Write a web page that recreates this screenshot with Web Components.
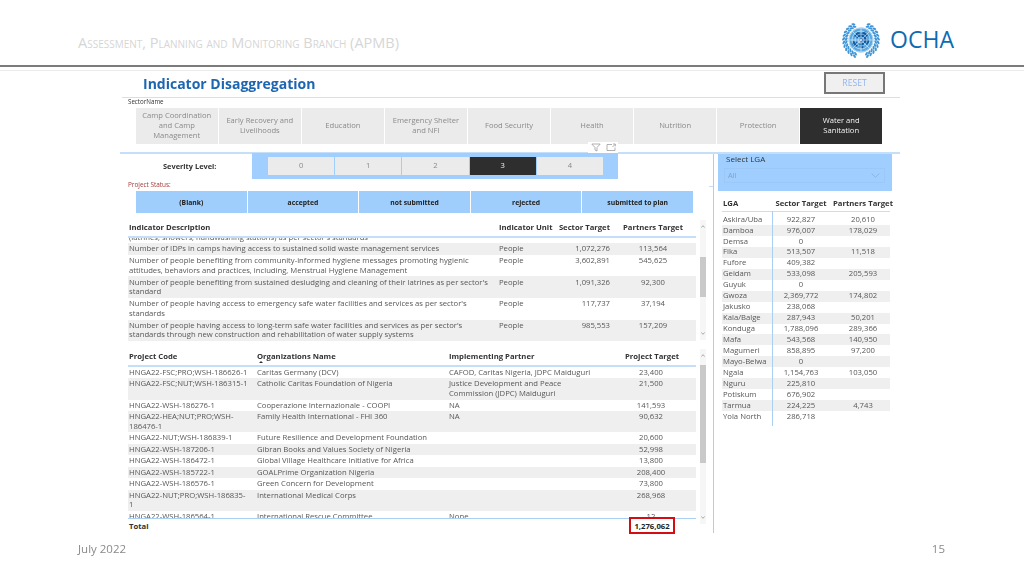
<!DOCTYPE html>
<html>
<head>
<meta charset="utf-8">
<title>Indicator Disaggregation</title>
<style>
html, body { margin: 0; width: 1024px; height: 576px; overflow: hidden; background: #fff; }
body { font-family: "Open Sans", "Liberation Sans", sans-serif; }
</style>
</head>
<body>
<slide-page>
  <slide-header slot="header">Assessment, Planning and Monitoring Branch (APMB)</slide-header>

  <report-title>Indicator Disaggregation</report-title>
  <field-label>SectorName</field-label>
  <tile-row style="--tile-h:36px; --tile-gap:1.5px; --tile-font:7.6px; margin:2px 18px 0 16px">
    <slicer-tile>Camp Coordination<br>and Camp<br>Management</slicer-tile>
    <slicer-tile>Early Recovery and<br>Livelihoods</slicer-tile>
    <slicer-tile>Education</slicer-tile>
    <slicer-tile>Emergency Shelter<br>and NFI</slicer-tile>
    <slicer-tile>Food Security</slicer-tile>
    <slicer-tile>Health</slicer-tile>
    <slicer-tile>Nutrition</slicer-tile>
    <slicer-tile>Protection</slicer-tile>
    <slicer-tile selected>Water and<br>Sanitation</slicer-tile>
  </tile-row>
  <visual-icons></visual-icons>

  <report-split>
    <div slot="left">
      <severity-bar>
        <slicer-tile>0</slicer-tile>
        <slicer-tile>1</slicer-tile>
        <slicer-tile>2</slicer-tile>
        <slicer-tile selected>3</slicer-tile>
        <slicer-tile>4</slicer-tile>
      </severity-bar>
      <field-label status>Project Status:</field-label>
      <status-bar>
        <status-button>(Blank)</status-button>
        <status-button>accepted</status-button>
        <status-button>not submitted</status-button>
        <status-button>rejected</status-button>
        <status-button>submitted to plan</status-button>
      </status-bar>

      <data-table style="--cols:370px 58px 53px 86px; --row-pad:1.1px; --body-h:105px; --gap-top:7px; --thumb-top:37px; --thumb-h:40px; --track-h:120px; --skip:-5.8px; --first-pad:0px">
        <table-head>
          <span>Indicator Description</span><span>Indicator Unit</span><span class="r">Sector Target</span><span class="c">Partners Target</span>
        </table-head>
        <table-row><span>(latrines, showers, handwashing stations) as per sector's standards</span><span></span><span></span><span></span></table-row>
        <table-row><span>Number of IDPs in camps having access to sustained solid waste management services</span><span>People</span><span class="r">1,072,276</span><span class="c">113,564</span></table-row>
        <table-row><span>Number of people benefiting from community-informed hygiene messages promoting hygienic<br>attitudes, behaviors and practices, including, Menstrual Hygiene Management</span><span>People</span><span class="r">3,602,891</span><span class="c">545,625</span></table-row>
        <table-row><span>Number of people benefiting from sustained desludging and cleaning of their latrines as per sector's<br>standard</span><span>People</span><span class="r">1,091,326</span><span class="c">92,300</span></table-row>
        <table-row><span>Number of people having access to emergency safe water facilities and services as per sector's<br>standards</span><span>People</span><span class="r">117,737</span><span class="c">37,194</span></table-row>
        <table-row><span>Number of people having access to long-term safe water facilities and services as per sector's<br>standards through new construction and rehabilitation of water supply systems</span><span>People</span><span class="r">985,553</span><span class="c">157,209</span></table-row>
        <table-row><span>Number of people having access to sanitation facilities</span><span>People</span><span class="r">2,944,907</span><span class="c">199,770</span></table-row>
      </data-table>

      <data-table style="--cols:128px 192px 176px 52px; --row-pad:.9px; --body-h:151px; --gap-top:6px; --thumb-top:16px; --thumb-h:98px; --track-h:175px; --skip:0px; --first-pad:.9px">
        <table-head>
          <span>Project Code</span><span sorted>Organizations Name</span><span>Implementing Partner</span><span class="c nowrap">Project Target</span>
        </table-head>
        <table-row><span>HNGA22-FSC;PRO;WSH-186626-1</span><span>Caritas Germany (DCV)</span><span>CAFOD, Caritas Nigeria, JDPC Maiduguri</span><span class="c">23,400</span></table-row>
        <table-row><span>HNGA22-FSC;NUT;WSH-186315-1</span><span>Catholic Caritas Foundation of Nigeria</span><span>Justice Development and Peace<br>Commission (JDPC) Maiduguri</span><span class="c">21,500</span></table-row>
        <table-row><span>HNGA22-WSH-186276-1</span><span>Cooperazione Internazionale - COOPI</span><span>NA</span><span class="c">141,593</span></table-row>
        <table-row><span>HNGA22-HEA;NUT;PRO;WSH-<br>186476-1</span><span>Family Health International - FHI 360</span><span>NA</span><span class="c">90,632</span></table-row>
        <table-row><span>HNGA22-NUT;WSH-186839-1</span><span class="nowrap">Future Resilience and Development Foundation</span><span></span><span class="c">20,600</span></table-row>
        <table-row><span>HNGA22-WSH-187206-1</span><span>Gibran Books and Values Society of Nigeria</span><span></span><span class="c">52,998</span></table-row>
        <table-row><span>HNGA22-WSH-186472-1</span><span>Global Village Healthcare Initiative for Africa</span><span></span><span class="c">13,800</span></table-row>
        <table-row><span>HNGA22-WSH-185722-1</span><span>GOALPrime Organization Nigeria</span><span></span><span class="c">208,400</span></table-row>
        <table-row><span>HNGA22-WSH-186576-1</span><span>Green Concern for Development</span><span></span><span class="c">73,800</span></table-row>
        <table-row><span>HNGA22-NUT;PRO;WSH-186835-<br>1</span><span>International Medical Corps</span><span></span><span class="c">268,968</span></table-row>
        <table-row><span>HNGA22-WSH-186564-1</span><span>International Rescue Committee</span><span>None</span><span class="c">12</span></table-row>
        <table-total slot="total"><span>Total</span><span></span><span></span><mark-cell>1,276,062</mark-cell></table-total>
      </data-table>
    </div>

    <lga-panel slot="right">
      <table-row><span>Askira/Uba</span><span class="c">922,827</span><span class="c">20,610</span></table-row>
      <table-row><span>Damboa</span><span class="c">976,007</span><span class="c">178,029</span></table-row>
      <table-row><span>Demsa</span><span class="c">0</span><span class="c"></span></table-row>
      <table-row><span>Fika</span><span class="c">513,507</span><span class="c">11,518</span></table-row>
      <table-row><span>Fufore</span><span class="c">409,382</span><span class="c"></span></table-row>
      <table-row><span>Geidam</span><span class="c">533,098</span><span class="c">205,593</span></table-row>
      <table-row><span>Guyuk</span><span class="c">0</span><span class="c"></span></table-row>
      <table-row><span>Gwoza</span><span class="c">2,369,772</span><span class="c">174,802</span></table-row>
      <table-row><span>Jakusko</span><span class="c">238,068</span><span class="c"></span></table-row>
      <table-row><span>Kala/Balge</span><span class="c">287,943</span><span class="c">50,201</span></table-row>
      <table-row><span>Konduga</span><span class="c">1,788,096</span><span class="c">289,366</span></table-row>
      <table-row><span>Mafa</span><span class="c">543,568</span><span class="c">140,950</span></table-row>
      <table-row><span>Magumeri</span><span class="c">858,895</span><span class="c">97,200</span></table-row>
      <table-row><span>Mayo-Belwa</span><span class="c">0</span><span class="c"></span></table-row>
      <table-row><span>Ngala</span><span class="c">1,154,763</span><span class="c">103,050</span></table-row>
      <table-row><span>Nguru</span><span class="c">225,810</span><span class="c"></span></table-row>
      <table-row><span>Potiskum</span><span class="c">676,902</span><span class="c"></span></table-row>
      <table-row><span>Tarmua</span><span class="c">224,225</span><span class="c">4,743</span></table-row>
      <table-row><span>Yola North</span><span class="c">286,718</span><span class="c"></span></table-row>
    </lga-panel>
  </report-split>

  <slide-footer slot="footer"></slide-footer>
</slide-page>

<script>
// tiny helper so each element below stays a few lines
function shadow(el, html) {
  el.attachShadow({mode: 'open'}).innerHTML = html
}

class SlidePage extends HTMLElement {
  constructor() {
    super()
    shadow(this, `<style>
:host { display: flex; flex-direction: column; width: 1024px; height: 576px; overflow: hidden; position: relative; }
.report { flex: 1; width: 780px; margin-left: 120px; min-height: 0; filter: blur(.35px); position: relative; }
</style>
<slot name="header"></slot>
<div class="report"><slot></slot></div>
<slot name="footer"></slot>`)
  }
}

class UnEmblem extends HTMLElement {
  constructor() {
    super()
    let leaves = ''
    for (const side of [1, -1]) {
      for (let a = 26; a <= 168; a += 12) {
        const rad = a * Math.PI / 180
        for (const r of [14.8, 17.4]) {
          const x = (20 + side * r * Math.sin(rad)).toFixed(1)
          const y = (20 - r * Math.cos(rad)).toFixed(1)
          leaves += `<ellipse cx="${x}" cy="${y}" rx="1.05" ry="2" fill="#3d94d6" transform="rotate(${side * (a + 55)} ${x} ${y})"/>`
        }
      }
    }
    let spokes = ''
    for (let a = 0; a < 180; a += 45) {
      spokes += `<line x1="20" y1="8" x2="20" y2="32" transform="rotate(${a} 20 20)"/>`
    }
    shadow(this, `<style>:host { display: block; width: 40px; height: 40px; } svg { display: block; }</style>
<svg width="40" height="40" viewBox="0 0 40 40">
  ${leaves}
  <circle cx="20" cy="20" r="12.4" fill="#5aa8e0"/>
  <path fill="#0d5ea8" d="M20 20l-7-4 3-4 5 1 3-2 3 4-2 3 4 3-3 4-3-2-1 6-4-3zM12 21l4 1 1 4-3 1-3-3z"/>
  <g fill="none" stroke="#fff" stroke-width=".5">
    <circle cx="20" cy="20" r="12"/><circle cx="20" cy="20" r="9"/><circle cx="20" cy="20" r="6"/><circle cx="20" cy="20" r="3"/>
    ${spokes}
  </g>
</svg>`)
  }
}

class SlideHeader extends HTMLElement {
  constructor() {
    super()
    shadow(this, `<style>
:host { display: flex; align-items: flex-start; height: 65px; border-bottom: 2px solid #7b7b7b; box-shadow: 0 3px 0 0 #fff, 0 4px 0 0 #ececec; font-family: "Open Sans", "Liberation Sans", sans-serif; }
.t { margin: 34px 0 0 78px; flex: 1; font-size: 14.5px; line-height: 18px; font-variant: small-caps; color: #d6d6d6; white-space: nowrap; }
un-emblem { margin: 20px 9px 0 0; }
.o { margin: 24px 70px 0 0; font-size: 23px; line-height: 31px; color: #0b6cb3; }
</style>
<div class="t"><slot></slot></div><un-emblem></un-emblem><div class="o">OCHA</div>`)
  }
}

class ReportTitle extends HTMLElement {
  constructor() {
    super()
    shadow(this, `<style>
:host { display: flex; align-items: center; justify-content: space-between; height: 26px; margin-top: 4px; margin-left: 2px; padding: 0 15px 0 21px; border-bottom: 1px solid #cfe2f5; font-family: "Open Sans", sans-serif; }
h1 { margin: 0; font-size: 14px; line-height: 20px; font-weight: 700; color: #1d66b1; }
button { width: 61px; height: 22px; margin-bottom: 2px; padding: 0; border: 2px solid #777; background: #f0f0f0; color: #8fb6f2; font: 8.6px "Open Sans", sans-serif; }
</style>
<h1><slot></slot></h1><button>RESET</button>`)
  }
}

class FieldLabel extends HTMLElement {
  constructor() {
    super()
    shadow(this, `<style>
:host { display: block; height: 8px; margin: 0 0 0 8px; font-size: 6.2px; line-height: 8px; color: #333; }
:host([status]) { color: #a13a3a; margin-top: 2px; font-size: 6.4px; }
</style><slot></slot>`)
  }
}

class TileRow extends HTMLElement {
  constructor() {
    super()
    shadow(this, `<style>
:host { display: grid; grid-auto-flow: column; grid-auto-columns: 1fr; gap: var(--tile-gap, 1px); height: var(--tile-h, 18px); }
</style><slot></slot>`)
  }
}

class SlicerTile extends HTMLElement {
  constructor() {
    super()
    shadow(this, `<style>
:host { display: flex; align-items: center; justify-content: center; text-align: center; background: #ebebeb; color: #8a8a8a; font-size: var(--tile-font, 7.6px); line-height: 9.7px; }
:host([selected]) { background: #2e2e2e; color: #f4f4f4; }
</style><div><slot></slot></div>`)
  }
}

class VisualIcons extends HTMLElement {
  constructor() {
    super()
    shadow(this, `<style>
:host { display: block; height: 8px; border-bottom: 2px solid #c5dff8; position: relative; }
.i { position: absolute; left: 468px; top: -2px; width: 30px; height: 11px; background: #fff; }
svg { position: absolute; top: 1px; }
</style>
<div class="i">
  <svg style="left:3px" width="10" height="9" viewBox="0 0 10 9" fill="none" stroke="#8f8f8f" stroke-width=".7"><path d="M.8 1h8.4L6 4.5V8L4 7V4.5z"/></svg>
  <svg style="left:18px" width="10" height="9" viewBox="0 0 10 9" fill="none" stroke="#8f8f8f" stroke-width=".7"><path d="M6 1.5H1v6h8V4.5M6.5 4L9 1.5M7 1h2.3v2.3"/></svg>
</div>`)
  }
}

class ReportSplit extends HTMLElement {
  constructor() {
    super()
    shadow(this, `<style>
:host { display: grid; grid-template-columns: 594px 178px; height: 376px; }
.l { border-right: 1px solid #a9cff2; position: relative; }
.l::after { content: ""; position: absolute; right: 0; top: 32px; width: 4px; height: 1px; background: #c5dff8; }
.r { padding-left: 4px; }
</style>
<div class="l"><slot name="left"></slot></div>
<div class="r"><slot name="right"></slot></div>`)
  }
}

class SeverityBar extends HTMLElement {
  constructor() {
    super()
    shadow(this, `<style>
:host { display: flex; align-items: center; height: 26px; margin-top: -1px; }
b { width: 132px; padding-left: 43px; box-sizing: border-box; font-size: 7.4px; color: #333; }
.p { width: 366px; height: 26px; box-sizing: border-box; padding: 4px 15px 4px 16px; background: #a0cfff; display: grid; grid-auto-flow: column; grid-auto-columns: 1fr; gap: 1px; }
</style>
<b>Severity Level:</b><div class="p"><slot></slot></div>`)
  }
}

class StatusBar extends HTMLElement {
  constructor() {
    super()
    shadow(this, `<style>
:host { display: grid; grid-auto-flow: column; grid-auto-columns: 1fr; gap: 1px; height: 22px; margin: 2px 0 0 16px; width: 557px; }
</style><slot></slot>`)
  }
}

class StatusButton extends HTMLElement {
  constructor() {
    super()
    shadow(this, `<style>
:host { display: flex; align-items: center; justify-content: center; background: #9fcdfc; color: #222; font-size: 6.8px; font-weight: 700; }
</style><slot></slot>`)
  }
}

// cells are plain spans in light DOM, the slot puts them straight into the grid
const cellStyles = `
::slotted(span) { min-width: 0; }
::slotted(.r) { text-align: right; }
::slotted(.c) { text-align: center; }
::slotted(.nowrap) { white-space: nowrap; }
::slotted([sorted]) { position: relative; }
::slotted([sorted])::after { content: ""; position: absolute; left: 2px; top: 9.5px; border: 2px solid transparent; border-top: 0; border-bottom: 2.5px solid #333; }
`

class TableRow extends HTMLElement {
  constructor() {
    super()
    shadow(this, `<style>
:host { display: grid; grid-template-columns: var(--cols); padding: var(--row-pad, 1px) 0 var(--row-pad, 1px) 1px; font-size: 7.7px; line-height: 9.7px; color: #575757; }
:host(:nth-of-type(even)) { background: #efefef; }
:host(:first-of-type) { margin-top: var(--skip, 0); padding-bottom: var(--first-pad, var(--row-pad)); }
${cellStyles}
</style><slot></slot>`)
  }
}

class TableHead extends HTMLElement {
  constructor() {
    super()
    shadow(this, `<style>
:host { display: grid; grid-template-columns: var(--cols); align-items: center; box-sizing: content-box; height: 14px; padding: 0 0 2px 1px; border-bottom: 2px solid #c5dff8; font-size: 7.7px; font-weight: 700; color: #333; }
${cellStyles}
</style><slot></slot>`)
  }
}

class TableTotal extends HTMLElement {
  constructor() {
    super()
    shadow(this, `<style>
:host { display: grid; grid-template-columns: var(--cols); grid-template-rows: 14px; align-items: center; padding-left: 1px; border-top: 1px solid #a9cff2; font-size: 7.7px; font-weight: 700; color: #333; background: #fff; position: relative; }
</style><slot></slot>`)
  }
}

class MarkCell extends HTMLElement {
  constructor() {
    super()
    shadow(this, `<style>
:host { display: flex; align-items: center; justify-content: center; align-self: start; box-sizing: border-box; width: 46px; height: 17px; margin: -2px 0 0 4px; border: 2px solid #d40c14; background: #fff; color: #222; position: relative; }
</style><slot></slot>`)
  }
}

class DataTable extends HTMLElement {
  constructor() {
    super()
    shadow(this, `<style>
:host { display: grid; grid-template-columns: 568px 12px; margin: var(--gap-top) 0 0 8px; position: relative; }
.b { height: var(--body-h); overflow: hidden; }
.s { grid-column: 2; grid-row: 1 / span 3; margin-left: 4px; width: 6px; height: var(--track-h); background: #f6f6f6; position: relative; }
.s i { position: absolute; left: 0; width: 6px; top: var(--thumb-top); height: var(--thumb-h); background: #c9c9c9; }
.s svg { position: absolute; left: 1px; }
</style>
<div><slot name="head"></slot></div>
<div class="s">
  <i></i>
  <svg style="top:5px" width="4" height="3" viewBox="0 0 4 3" fill="none" stroke="#777" stroke-width=".6"><path d="M.3 2.6L2 .7l1.7 1.9"/></svg>
  <svg style="bottom:5px" width="4" height="3" viewBox="0 0 4 3" fill="none" stroke="#777" stroke-width=".6"><path d="M.3.4L2 2.3 3.7.4"/></svg>
</div>
<div class="b"><slot></slot></div>
<div><slot name="total"></slot></div>`)
  }
  connectedCallback() {
    const head = this.querySelector('table-head')
    if (head) head.slot = 'head'
  }
}

class LgaPanel extends HTMLElement {
  constructor() {
    super()
    shadow(this, `<style>
:host { display: block; --cols: 50px 56px 68px; }
.f { height: 38px; margin-top: -1px; box-sizing: border-box; padding: 0 7px 0 6px; background: #a0cfff; color: #333; font-size: 8px; line-height: 11px; }
.f label { margin-left: 2px; }
.d { display: flex; align-items: center; justify-content: space-between; height: 15px; margin-top: 4px; padding: 0 4px 0 3px; border: 1px solid #9cc8f8; box-sizing: border-box; color: #7fa0c8; font-size: 7.4px; }
.h { display: grid; grid-template-columns: var(--cols); align-items: end; height: 21px; margin: 0 2px 0 4px; padding: 0 0 3px 1px; box-sizing: border-box; border-bottom: 1.5px solid #c5dff8; font-size: 7.7px; font-weight: 700; color: #333; white-space: nowrap; }
.h span + span { text-align: center; }
.rows { margin: 2px 2px 0 4px; display: block; position: relative; --row-pad: .63px; }
.rows::after { content: ""; position: absolute; left: 50px; top: -3px; bottom: -4px; width: 1px; background: #a9cff2; }
</style>
<div class="f"><label>Select LGA</label>
  <div class="d"><span>All</span><svg width="9" height="5" viewBox="0 0 9 5" fill="none" stroke="#86b0dc" stroke-width=".8"><path d="M.6.6l3.9 3.6L8.4.6"/></svg></div>
</div>
<div class="h"><span>LGA</span><span>Sector Target</span><span>Partners Target</span></div>
<div class="rows"><slot></slot></div>`)
  }
}

class SlideFooter extends HTMLElement {
  constructor() {
    super()
    shadow(this, `<style>
:host { position: absolute; left: 78px; right: 79px; top: 541px; display: flex; justify-content: space-between; font-size: 11.5px; line-height: 16px; color: #8a8a8a; }
</style><span>July 2022</span><span>15</span>`)
  }
}

customElements.define('un-emblem', UnEmblem)
customElements.define('slide-page', SlidePage)
customElements.define('slide-header', SlideHeader)
customElements.define('report-title', ReportTitle)
customElements.define('field-label', FieldLabel)
customElements.define('tile-row', TileRow)
customElements.define('slicer-tile', SlicerTile)
customElements.define('visual-icons', VisualIcons)
customElements.define('report-split', ReportSplit)
customElements.define('severity-bar', SeverityBar)
customElements.define('status-bar', StatusBar)
customElements.define('status-button', StatusButton)
customElements.define('table-row', TableRow)
customElements.define('table-head', TableHead)
customElements.define('table-total', TableTotal)
customElements.define('mark-cell', MarkCell)
customElements.define('data-table', DataTable)
customElements.define('lga-panel', LgaPanel)
customElements.define('slide-footer', SlideFooter)
</script>
</body>
</html>
